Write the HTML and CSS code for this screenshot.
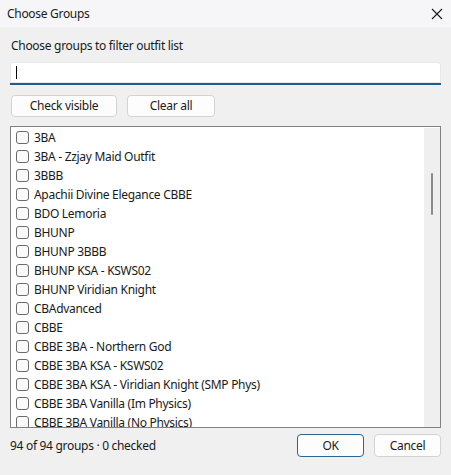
FILE: index.html
```html
<!DOCTYPE html>
<html>
<head>
<meta charset="utf-8">
<link rel="stylesheet" href="styles.css">
</head>
<body>
<div class="window">
  <div class="titlebar">
    <span class="title">Choose Groups</span>
    <span class="close">
      <svg width="12" height="12" viewBox="0 0 12 12"><path d="M1 1 L11 11 M11 1 L1 11" stroke="#1b1b1b" stroke-width="1.1" fill="none"/></svg>
    </span>
  </div>
  <div class="content">
    <div class="label">Choose groups to filter outfit list</div>
    <div class="input"><span class="caret"></span></div>
    <div class="btnrow">
      <div class="btn btn-check">Check visible</div>
      <div class="btn btn-clear">Clear all</div>
    </div>
    <div class="list">
      <div class="items">
        <div class="row"><span class="cb"></span><span>3BA</span></div>
        <div class="row"><span class="cb"></span><span>3BA - Zzjay Maid Outfit</span></div>
        <div class="row"><span class="cb"></span><span>3BBB</span></div>
        <div class="row"><span class="cb"></span><span>Apachii Divine Elegance CBBE</span></div>
        <div class="row"><span class="cb"></span><span>BDO Lemoria</span></div>
        <div class="row"><span class="cb"></span><span>BHUNP</span></div>
        <div class="row"><span class="cb"></span><span>BHUNP 3BBB</span></div>
        <div class="row"><span class="cb"></span><span>BHUNP KSA - KSWS02</span></div>
        <div class="row"><span class="cb"></span><span>BHUNP Viridian Knight</span></div>
        <div class="row"><span class="cb"></span><span>CBAdvanced</span></div>
        <div class="row"><span class="cb"></span><span>CBBE</span></div>
        <div class="row"><span class="cb"></span><span>CBBE 3BA - Northern God</span></div>
        <div class="row"><span class="cb"></span><span>CBBE 3BA KSA - KSWS02</span></div>
        <div class="row"><span class="cb"></span><span>CBBE 3BA KSA - Viridian Knight (SMP Phys)</span></div>
        <div class="row"><span class="cb"></span><span>CBBE 3BA Vanilla (Im Physics)</span></div>
        <div class="row"><span class="cb"></span><span>CBBE 3BA Vanilla (No Physics)</span></div>
      </div>
      <div class="scrollbar"><div class="thumb"></div></div>
    </div>
    <div class="footer">
      <span class="status">94 of 94 groups · 0 checked</span>
      <div class="btn btn-ok">OK</div>
      <div class="btn btn-cancel">Cancel</div>
    </div>
  </div>
</div>
</body>
</html>
```
FILE: styles.css
```css
html, body {
  margin: 0;
  padding: 0;
}
body {
  width: 451px;
  height: 475px;
  background: #f0f0f0;
  font-family: "Noto Sans", "Open Sans", sans-serif;
  font-size: 12px;
  letter-spacing: -0.3px;
  color: #1a1a1a;
  overflow: hidden;
}
.window {
  display: flex;
  flex-direction: column;
  height: 475px;
}
.titlebar {
  height: 27px;
  flex: none;
  display: flex;
  align-items: center;
  justify-content: space-between;
  padding-left: 7px;
  padding-right: 8px;
  background: #f6f6f8;
}
.title {
  font-size: 12px;
  line-height: 16px;
}
.close {
  display: flex;
  width: 12px;
  height: 12px;
}
.content {
  display: flex;
  flex-direction: column;
  padding: 0 10px;
}
.label {
  margin-top: 11px;
  line-height: 16px;
  height: 16px;
  padding-left: 1px;
}
.input {
  margin-top: 8px;
  height: 21px;
  background: #ffffff;
  border-bottom: 2px solid #1f5f90;
  border-radius: 3px 3px 0 0;
  box-shadow: 0 0 0 1px #e8e8e8 inset;
  display: flex;
  align-items: center;
  padding-left: 6px;
}
.caret {
  width: 1px;
  height: 13px;
  background: #000;
}
.btnrow {
  margin-top: 10px;
  display: flex;
  gap: 10px;
  padding-left: 1px;
}
.btn {
  box-sizing: border-box;
  height: 22px;
  background: #fdfdfd;
  border: 1px solid #d3d3d3;
  border-radius: 4px;
  display: flex;
  align-items: center;
  justify-content: center;
  line-height: 16px;
}
.btn-check { width: 106px; }
.btn-clear { width: 88px; }
.list {
  margin-top: 9px;
  box-sizing: border-box;
  height: 302px;
  width: 431px;
  border: 1px solid #828282;
  background: #ffffff;
  display: flex;
  overflow: hidden;
}
.items {
  flex: 1;
  padding-top: 1px;
  overflow: hidden;
}
.row {
  height: 19px;
  display: flex;
  align-items: center;
  padding-left: 5px;
  white-space: nowrap;
}
.cb {
  box-sizing: border-box;
  width: 13px;
  height: 13px;
  border: 1px solid #6b6b6b;
  border-radius: 3px;
  background: #fafafa;
  margin-right: 5px;
  flex: none;
}
.scrollbar {
  width: 16px;
  flex: none;
  margin-top: 1px;
  background: #efefef;
  display: flex;
  justify-content: center;
}
.thumb {
  margin-top: 45px;
  width: 2px;
  height: 42px;
  border-radius: 1px;
  background: #8a8a8a;
}
.footer {
  margin-top: 6px;
  display: flex;
  align-items: center;
}
.status {
  flex: 1;
  line-height: 16px;
}
.btn-ok {
  width: 67px;
  height: 23px;
  border: 1px solid #2a6592;
  margin-right: 10px;
}
.btn-cancel {
  width: 67px;
  height: 23px;
}
```
